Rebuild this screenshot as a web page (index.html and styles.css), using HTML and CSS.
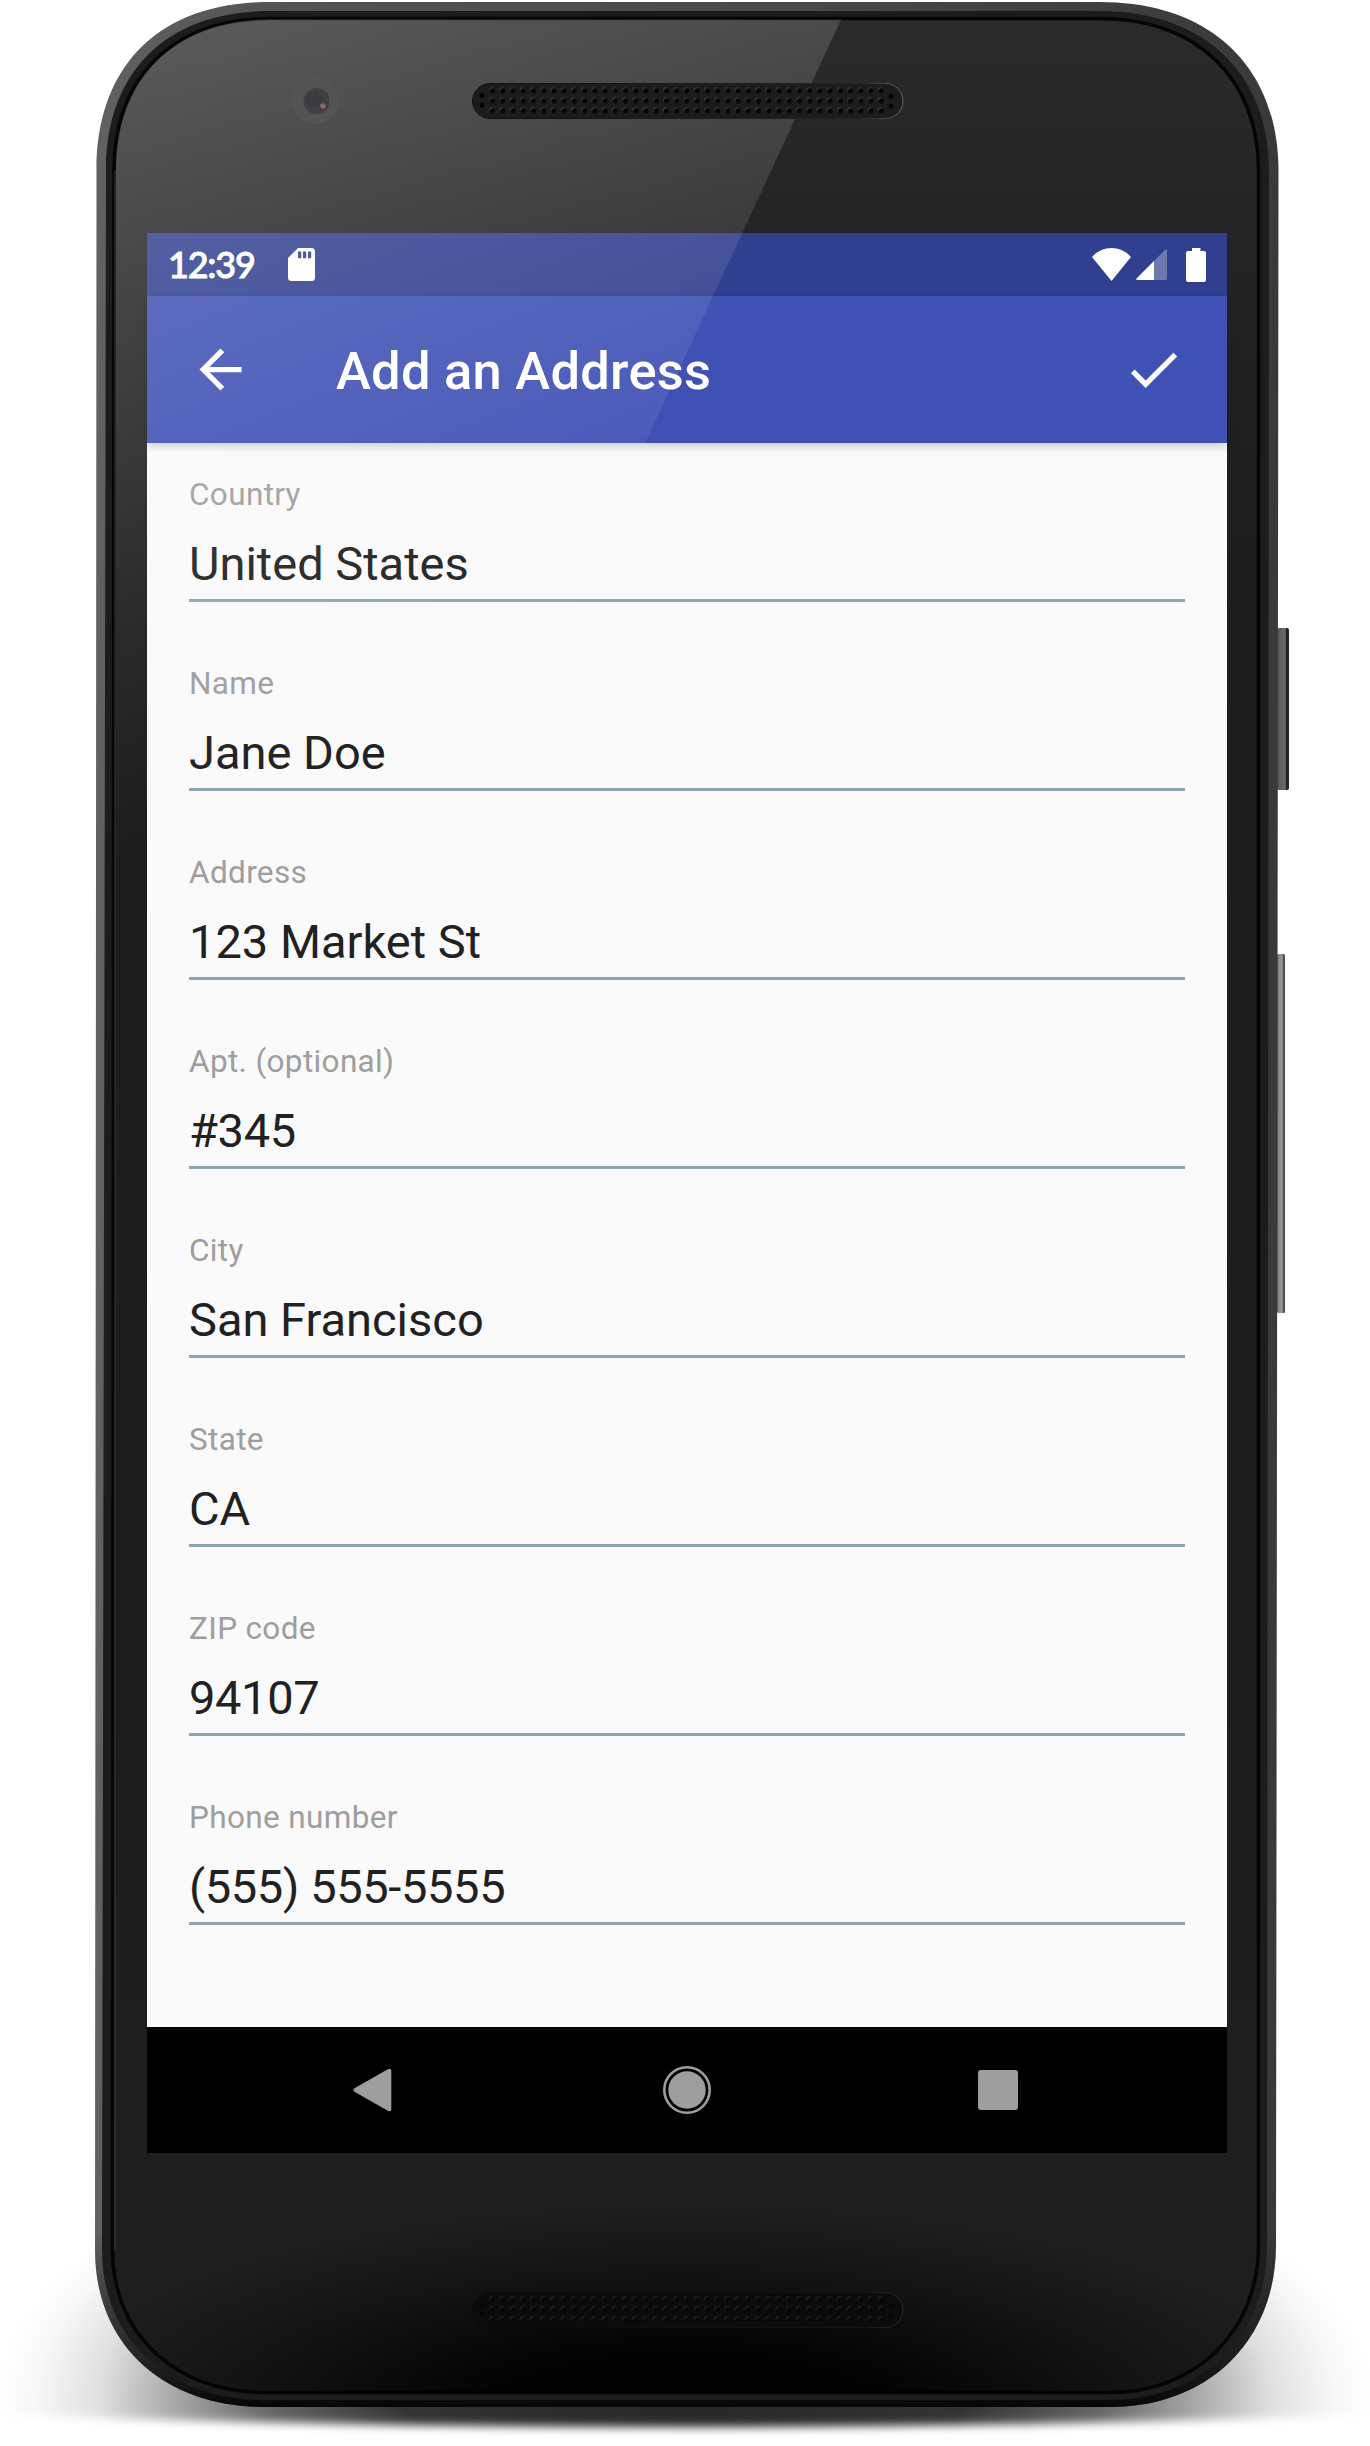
FILE: index.html
```html
<!DOCTYPE html>
<html lang="en">
<head>
<meta charset="utf-8">
<title>Add an Address</title>
<link rel="stylesheet" href="styles.css">
</head>
<body>
<div class="stage">
  <svg class="layer" viewBox="0 0 1370 2446" aria-hidden="true">
    <defs>
      <radialGradient id="shadow" gradientUnits="userSpaceOnUse" cx="0" cy="0" r="1" gradientTransform="translate(685 2400) scale(690 300)">
        <stop offset="0" stop-color="#000" stop-opacity=".85"/>
        <stop offset=".4" stop-color="#000" stop-opacity=".8"/>
        <stop offset=".6" stop-color="#000" stop-opacity=".6"/>
        <stop offset=".72" stop-color="#000" stop-opacity=".38"/>
        <stop offset=".85" stop-color="#000" stop-opacity=".12"/>
        <stop offset=".94" stop-color="#000" stop-opacity=".03"/>
        <stop offset="1" stop-color="#000" stop-opacity="0"/>
      </radialGradient>
      <filter id="soft" filterUnits="userSpaceOnUse" x="-120" y="1980" width="1610" height="480"><feGaussianBlur stdDeviation="5"/></filter>
      <mask id="floor" maskUnits="userSpaceOnUse" x="0" y="2000" width="1370" height="446">
        <path d="M-100 2000H1470V2411Q685 2443-100 2411Z" fill="#fff" filter="url(#soft)"/>
      </mask>
      <linearGradient id="metal" gradientUnits="userSpaceOnUse" x1="95" y1="0" x2="1278" y2="0">
        <stop offset="0" stop-color="#626162"/><stop offset=".15" stop-color="#545354"/><stop offset=".6" stop-color="#4a4949"/><stop offset="1" stop-color="#3a3839"/>
      </linearGradient>
      <linearGradient id="metalFade" gradientUnits="userSpaceOnUse" x1="0" y1="2230" x2="0" y2="2407">
        <stop offset="0" stop-color="#0b0b0b" stop-opacity="0"/><stop offset=".75" stop-color="#141313" stop-opacity=".8"/><stop offset="1" stop-color="#060606"/>
      </linearGradient>
      <linearGradient id="glass" gradientUnits="userSpaceOnUse" x1="0" y1="19" x2="0" y2="2392">
        <stop offset="0" stop-color="#2a2a2a"/><stop offset=".09" stop-color="#242424"/><stop offset=".25" stop-color="#1c1c1c"/><stop offset="1" stop-color="#1e1e1e"/>
      </linearGradient>
      <radialGradient id="chin" gradientUnits="userSpaceOnUse" cx="0" cy="0" r="1" gradientTransform="translate(685 2420) scale(660 215)">
        <stop offset="0" stop-color="#000"/><stop offset=".35" stop-color="#000" stop-opacity=".88"/><stop offset=".7" stop-color="#000" stop-opacity=".35"/><stop offset="1" stop-color="#000" stop-opacity="0"/>
      </radialGradient>
      <linearGradient id="power" x1="0" x2="1" y1="0" y2="0">
        <stop offset="0" stop-color="#4b4b4b"/><stop offset=".25" stop-color="#606060"/><stop offset=".7" stop-color="#686868"/><stop offset=".78" stop-color="#1c1c1c"/><stop offset="1" stop-color="#2a2a2a"/>
      </linearGradient>
      <linearGradient id="volume" x1="0" x2="1" y1="0" y2="0">
        <stop offset="0" stop-color="#555"/><stop offset=".25" stop-color="#8f8f8f"/><stop offset=".65" stop-color="#949494"/><stop offset=".85" stop-color="#444"/><stop offset="1" stop-color="#555"/>
      </linearGradient>
    </defs>
    <rect y="2000" width="1370" height="446" fill="url(#shadow)" mask="url(#floor)"/>
    <rect x="1277" y="628" width="12" height="162" rx="2" fill="url(#power)"/>
    <rect x="1277" y="954" width="8" height="359" rx="1.5" fill="url(#volume)"/>
    <path d="M96.500 170C96.500 67 158 2 270 2H1100C1210 2 1278 66 1278.500 170L1276 2245C1276 2342 1207 2407 1110 2407H265C163 2407 95 2344 95 2250Z" fill="url(#metal)"/>
    <path d="M96.500 170C96.500 67 158 2 270 2H1100C1210 2 1278 66 1278.500 170L1276 2245C1276 2342 1207 2407 1110 2407H265C163 2407 95 2344 95 2250Z" fill="url(#metalFade)"/>
    <path d="M106 170C106 72 166 11 270 11H1100C1202 11 1269 72 1269 170L1267 2245C1267 2337 1202 2400 1110 2400H265C168 2400 102 2339 102 2250Z" fill="#1d1c1c"/>
    <path d="M114 170C114 80 170 18.500 270 18.500H1100C1196 18.500 1258.500 78 1258.500 170V2245C1258.500 2331 1196 2392.500 1110 2392.500H265C174 2392.500 112.500 2333 112.500 2250Z" fill="url(#glass)" stroke="#050505" stroke-width="3.5"/>
    <path d="M114 170C114 80 170 18.500 270 18.500H1100C1196 18.500 1258.500 78 1258.500 170V2245C1258.500 2331 1196 2392.500 1110 2392.500H265C174 2392.500 112.500 2333 112.500 2250Z" fill="url(#chin)"/>
    <path d="M115 170V2250" stroke="#3a3a3a" fill="none"/>
  </svg>

  <main class="screen">
    <header class="status-bar">
      <span class="clock">12:39</span>
      <svg class="sd" viewBox="0 0 27 33"><path fill-rule="evenodd" d="M10 0H23.500Q27 0 27 3.500V29.500Q27 33 23.500 33H3.500Q0 33 0 29.500V10ZM10 3.500V10.300H13.300V3.500ZM15 3.500V10.300H18.200V3.500ZM20 3.500V10.300H23.200V3.500Z" fill="#fff"/></svg>
      <span class="spacer"></span>
      <svg class="wifi" viewBox="0 0 39 33"><path d="M0 9Q8 0 19.500 0T39 9L19.500 33Z" fill="#fff"/></svg>
      <svg class="signal" viewBox="0 0 31 31"><path d="M31 1.500Q31-.5 29 1L.8 29.200Q-.5 31 1.500 31H29.500Q31 31 31 29.500Z" fill="#fff" fill-opacity=".3"/><path d="M18 12L.8 29.200Q-.5 31 1.500 31H18Z" fill="#fff"/></svg>
      <svg class="battery" viewBox="0 0 20 34"><path d="M6 0H14.500V3H18Q20 3 20 5V32Q20 34 18 34H2Q0 34 0 32V5Q0 3 2 3H6Z" fill="#fff"/></svg>
    </header>
    <div class="app-bar">
      <svg class="icon" viewBox="0 0 24 24"><path d="M20 11H7.830l5.590-5.590L12 4l-8 8 8 8 1.410-1.410L7.830 13H20v-2z" fill="#fff"/></svg>
      <h1 class="title">Add an Address</h1>
      <svg class="icon" viewBox="0 0 24 24"><path d="M9 16.170L4.830 12l-1.420 1.410L9 19 21 7l-1.410-1.410z" fill="#fff"/></svg>
    </div>
    <section class="form">
      <div class="field"><div class="label">Country</div><div class="value">United States</div></div>
      <div class="field"><div class="label">Name</div><div class="value">Jane Doe</div></div>
      <div class="field"><div class="label">Address</div><div class="value">123 Market St</div></div>
      <div class="field"><div class="label">Apt. (optional)</div><div class="value digits">#345</div></div>
      <div class="field"><div class="label">City</div><div class="value">San Francisco</div></div>
      <div class="field"><div class="label">State</div><div class="value">CA</div></div>
      <div class="field"><div class="label">ZIP code</div><div class="value digits">94107</div></div>
      <div class="field"><div class="label">Phone number</div><div class="value digits">(555) 555-5555</div></div>
    </section>
    <nav class="nav-bar">
      <svg class="nav-icon" viewBox="0 0 48 48"><path d="M2.500 22.300L35.800 3.200Q39.300 1.500 39.300 5V43Q39.300 46.500 35.800 44.800L2.500 25.700Q.3 24 2.500 22.300Z" fill="#9e9e9e"/></svg>
      <svg class="nav-icon" viewBox="0 0 48 48"><circle cx="24" cy="24" r="22.700" fill="none" stroke="#9e9e9e" stroke-width="2.600"/><circle cx="24" cy="24" r="18.700" fill="#9e9e9e"/></svg>
      <svg class="nav-icon" viewBox="0 0 48 48"><rect x="4" y="4" width="40" height="40" rx="3" fill="#9e9e9e"/></svg>
    </nav>
  </main>

  <svg class="layer" viewBox="0 0 1370 2446" aria-hidden="true">
    <defs>
      <linearGradient id="glare" gradientUnits="userSpaceOnUse" x1="150" y1="50" x2="425" y2="742">
        <stop offset="0" stop-color="#fff" stop-opacity=".22"/><stop offset=".5" stop-color="#fff" stop-opacity=".11"/><stop offset="1" stop-color="#fff" stop-opacity="0"/>
      </linearGradient>
      <pattern id="holes" patternUnits="userSpaceOnUse" x="5.100" y="2.500" width="10.230" height="10">
        <circle cx="4.400" cy="4.200" r="2.300" fill="#4a4a4a"/><circle cx="5.200" cy="5.200" r="2.500" fill="#040404"/>
      </pattern>
      <g id="grille">
        <rect x="15.330" y="2.500" width="398.970" height="30" fill="url(#holes)"/>
        <circle cx="10" cy="12.500" r="2.500" fill="#040404"/><circle cx="10" cy="22" r="2.500" fill="#040404"/>
        <circle cx="419" cy="13.500" r="2.500" fill="#040404"/><circle cx="419" cy="23.300" r="2.500" fill="#040404"/>
      </g>
      <linearGradient id="rim" x1="0" x2="1" y1="0" y2="0"><stop offset="0" stop-color="#111"/><stop offset=".9" stop-color="#242424"/><stop offset="1" stop-color="#666"/></linearGradient>
      <linearGradient id="rimLow" x1="0" x2="1" y1="0" y2="0"><stop offset="0" stop-color="#080808"/><stop offset=".9" stop-color="#131313"/><stop offset="1" stop-color="#2c2c2c"/></linearGradient>
    </defs>
    <path d="M116 880V170C116 82 171 19.500 270 19.500H841L443 880Z" fill="url(#glare)"/>
    <circle cx="315.500" cy="101" r="22" fill="#535353" stroke="#606060" stroke-opacity=".5"/>
    <circle cx="316.500" cy="101" r="13" fill="#403f43"/>
    <circle cx="314" cy="99" r="8" fill="#3a3a40"/>
    <circle cx="323" cy="106" r="2.800" fill="#8c6664"/>
    <g transform="translate(472 83)">
      <rect x=".5" y=".5" width="430.500" height="35" rx="17.500" fill="#1c1c1c" stroke="url(#rim)"/>
      <use href="#grille"/>
    </g>
    <g transform="translate(472 2292)">
      <rect x=".5" y=".5" width="430.500" height="35" rx="17.500" fill="#0b0b0b" stroke="url(#rimLow)"/>
      <use href="#grille" opacity=".55"/>
    </g>
  </svg>
</div>
</body>
</html>
```

FILE: styles.css
```css
* { box-sizing: border-box; }

body {
  margin: 0;
  background: #fff;
  font-family: Roboto, sans-serif;
}

.stage {
  position: relative;
  width: 1370px;
  height: 2446px;
  padding: 233px 143px 293px 147px;
  overflow: hidden;
}

/* Phone body behind the screen, reflections in front of it */
.layer {
  position: absolute;
  inset: 0;
  width: 1370px;
  height: 2446px;
  pointer-events: none;
}

.screen {
  position: relative;
  display: flex;
  flex-direction: column;
  width: 1080px;
  height: 1920px;
  background: #fafafa;
}

.status-bar {
  display: flex;
  align-items: center;
  height: 63px;
  padding: 0 21px;
  background: #303f8f;
}

.clock {
  width: 120px;
  color: #fff;
  font-family: Lato, sans-serif;
  font-size: 36px;
  font-weight: 500;
  letter-spacing: -1.2px;
  line-height: 65px;
  -webkit-text-stroke: .9px #fff;
}

.sd { width: 27px; height: 33px; }
.spacer { flex: 1; }
.wifi { width: 39px; height: 33px; margin-right: 5px; }
.signal { width: 31px; height: 31px; margin-right: 19px; }
.battery { width: 20px; height: 34px; }

.app-bar {
  position: relative;
  display: flex;
  align-items: center;
  height: 147px;
  padding: 0 42px;
  background: #3f51b5;
  box-shadow: 0 3px 9px rgba(0, 0, 0, .2);
}

.icon { width: 63px; height: 63px; }

.title {
  flex: 1;
  margin: 0 0 0 84px;
  padding-top: 2px;
  color: #fff;
  font-size: 52.5px;
  font-weight: 500;
  letter-spacing: .25px;
  line-height: 64px;
}

.form {
  flex: 1;
  display: flex;
  flex-direction: column;
  gap: 62px;
  padding: 32px 42px 0;
}

.field {
  height: 127px;
  border-bottom: 3px solid #90a4ae;
}

.label {
  padding-top: 1px;
  color: #9e9e9e;
  font-size: 31.5px;
  letter-spacing: .35px;
  line-height: 38px;
}

.value {
  margin-top: 22px;
  color: #212121;
  font-size: 47px;
  line-height: 56px;
}

.digits { letter-spacing: -.36px; }

.nav-bar {
  display: flex;
  align-items: center;
  justify-content: center;
  gap: 263px;
  height: 126px;
  background: #000;
}

.nav-icon { width: 48px; height: 48px; }
```
